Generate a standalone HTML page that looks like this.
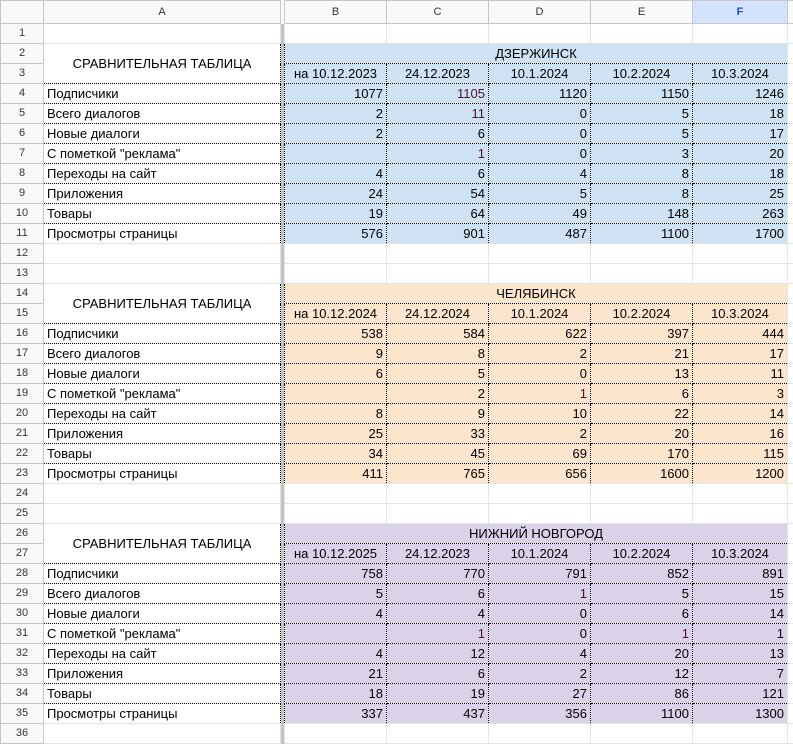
<!DOCTYPE html>
<html><head><meta charset="utf-8"><style>
body{margin:0;background:#fff;width:793px;height:729px;overflow:hidden;font-family:"Liberation Sans",Arial,sans-serif;}
table{border-collapse:collapse;table-layout:fixed;font-size:13px;color:#000;width:799px;}
td{height:19px;padding:0 3px;border:1px solid #e2e3e3;white-space:nowrap;overflow:hidden;line-height:19px;}
tr.h td{height:22px;background:#f8f9fa;border-color:#c7c7c7;font-size:11px;text-align:center;color:#333;}
td.n{background:#f8f9fa;border-color:#c7c7c7;font-size:11px;text-align:center;color:#333;padding:0;}
td.fz{background:#c4c4c4;border:none;padding:0;}
td.sel{background:#d3e3fd !important;color:#0b57d0 !important;font-weight:bold;}
.d{border:1px dotted #000;}
.r{text-align:right;}
.c{text-align:center;}
.b{background:#cfe2f3;}
.o{background:#fce5cd;}
.p{background:#d9d2e9;}
.rd{color:#4c0f2c;}
</style></head><body>
<table>
<colgroup><col style="width:43px"><col style="width:237px"><col style="width:4px"><col style="width:102px"><col style="width:102px"><col style="width:102px"><col style="width:102px"><col style="width:95px"><col style="width:12px"></colgroup>
<tr class="h"><td></td><td>A</td><td class="fz"></td><td>B</td><td>C</td><td>D</td><td>E</td><td class="sel">F</td><td></td></tr>
<tr><td class="n">1</td><td></td><td class="fz"></td><td></td><td></td><td></td><td></td><td></td><td></td></tr>

<tr><td class="n">2</td><td class="d c" rowspan="2">СРАВНИТЕЛЬНАЯ ТАБЛИЦА</td><td class="fz"></td><td class="d c b" colspan="5">ДЗЕРЖИНСК</td><td></td></tr>
<tr><td class="n">3</td><td class="fz"></td><td class="d c b">на 10.12.2023</td><td class="d c b">24.12.2023</td><td class="d c b">10.1.2024</td><td class="d c b">10.2.2024</td><td class="d c b">10.3.2024</td><td></td></tr>
<tr><td class="n">4</td><td class="d">Подписчики</td><td class="fz"></td><td class="d r b">1077</td><td class="d r b rd">1105</td><td class="d r b">1120</td><td class="d r b">1150</td><td class="d r b">1246</td><td></td></tr>
<tr><td class="n">5</td><td class="d">Всего диалогов</td><td class="fz"></td><td class="d r b">2</td><td class="d r b rd">11</td><td class="d r b">0</td><td class="d r b">5</td><td class="d r b">18</td><td></td></tr>
<tr><td class="n">6</td><td class="d">Новые диалоги</td><td class="fz"></td><td class="d r b">2</td><td class="d r b">6</td><td class="d r b">0</td><td class="d r b">5</td><td class="d r b">17</td><td></td></tr>
<tr><td class="n">7</td><td class="d">С пометкой "реклама"</td><td class="fz"></td><td class="d r b"></td><td class="d r b rd">1</td><td class="d r b">0</td><td class="d r b">3</td><td class="d r b">20</td><td></td></tr>
<tr><td class="n">8</td><td class="d">Переходы на сайт</td><td class="fz"></td><td class="d r b">4</td><td class="d r b">6</td><td class="d r b">4</td><td class="d r b">8</td><td class="d r b">18</td><td></td></tr>
<tr><td class="n">9</td><td class="d">Приложения</td><td class="fz"></td><td class="d r b">24</td><td class="d r b">54</td><td class="d r b">5</td><td class="d r b">8</td><td class="d r b">25</td><td></td></tr>
<tr><td class="n">10</td><td class="d">Товары</td><td class="fz"></td><td class="d r b">19</td><td class="d r b">64</td><td class="d r b">49</td><td class="d r b">148</td><td class="d r b">263</td><td></td></tr>
<tr><td class="n">11</td><td class="d">Просмотры страницы</td><td class="fz"></td><td class="d r b">576</td><td class="d r b">901</td><td class="d r b">487</td><td class="d r b">1100</td><td class="d r b">1700</td><td></td></tr>
<tr><td class="n">12</td><td></td><td class="fz"></td><td></td><td></td><td></td><td></td><td></td><td></td></tr>
<tr><td class="n">13</td><td></td><td class="fz"></td><td></td><td></td><td></td><td></td><td></td><td></td></tr>

<tr><td class="n">14</td><td class="d c" rowspan="2">СРАВНИТЕЛЬНАЯ ТАБЛИЦА</td><td class="fz"></td><td class="d c o" colspan="5">ЧЕЛЯБИНСК</td><td></td></tr>
<tr><td class="n">15</td><td class="fz"></td><td class="d c o">на 10.12.2024</td><td class="d c o">24.12.2024</td><td class="d c o">10.1.2024</td><td class="d c o">10.2.2024</td><td class="d c o">10.3.2024</td><td></td></tr>
<tr><td class="n">16</td><td class="d">Подписчики</td><td class="fz"></td><td class="d r o">538</td><td class="d r o">584</td><td class="d r o">622</td><td class="d r o">397</td><td class="d r o">444</td><td></td></tr>
<tr><td class="n">17</td><td class="d">Всего диалогов</td><td class="fz"></td><td class="d r o">9</td><td class="d r o">8</td><td class="d r o">2</td><td class="d r o">21</td><td class="d r o">17</td><td></td></tr>
<tr><td class="n">18</td><td class="d">Новые диалоги</td><td class="fz"></td><td class="d r o">6</td><td class="d r o">5</td><td class="d r o">0</td><td class="d r o">13</td><td class="d r o">11</td><td></td></tr>
<tr><td class="n">19</td><td class="d">С пометкой "реклама"</td><td class="fz"></td><td class="d r o"></td><td class="d r o">2</td><td class="d r o rd">1</td><td class="d r o">6</td><td class="d r o">3</td><td></td></tr>
<tr><td class="n">20</td><td class="d">Переходы на сайт</td><td class="fz"></td><td class="d r o">8</td><td class="d r o">9</td><td class="d r o">10</td><td class="d r o">22</td><td class="d r o">14</td><td></td></tr>
<tr><td class="n">21</td><td class="d">Приложения</td><td class="fz"></td><td class="d r o">25</td><td class="d r o">33</td><td class="d r o">2</td><td class="d r o">20</td><td class="d r o">16</td><td></td></tr>
<tr><td class="n">22</td><td class="d">Товары</td><td class="fz"></td><td class="d r o">34</td><td class="d r o">45</td><td class="d r o">69</td><td class="d r o">170</td><td class="d r o">115</td><td></td></tr>
<tr><td class="n">23</td><td class="d">Просмотры страницы</td><td class="fz"></td><td class="d r o">411</td><td class="d r o">765</td><td class="d r o">656</td><td class="d r o">1600</td><td class="d r o">1200</td><td></td></tr>
<tr><td class="n">24</td><td></td><td class="fz"></td><td></td><td></td><td></td><td></td><td></td><td></td></tr>
<tr><td class="n">25</td><td></td><td class="fz"></td><td></td><td></td><td></td><td></td><td></td><td></td></tr>

<tr><td class="n">26</td><td class="d c" rowspan="2">СРАВНИТЕЛЬНАЯ ТАБЛИЦА</td><td class="fz"></td><td class="d c p" colspan="5">НИЖНИЙ НОВГОРОД</td><td></td></tr>
<tr><td class="n">27</td><td class="fz"></td><td class="d c p">на 10.12.2025</td><td class="d c p">24.12.2023</td><td class="d c p">10.1.2024</td><td class="d c p">10.2.2024</td><td class="d c p">10.3.2024</td><td></td></tr>
<tr><td class="n">28</td><td class="d">Подписчики</td><td class="fz"></td><td class="d r p">758</td><td class="d r p">770</td><td class="d r p">791</td><td class="d r p">852</td><td class="d r p">891</td><td></td></tr>
<tr><td class="n">29</td><td class="d">Всего диалогов</td><td class="fz"></td><td class="d r p">5</td><td class="d r p">6</td><td class="d r p rd">1</td><td class="d r p">5</td><td class="d r p">15</td><td></td></tr>
<tr><td class="n">30</td><td class="d">Новые диалоги</td><td class="fz"></td><td class="d r p">4</td><td class="d r p">4</td><td class="d r p">0</td><td class="d r p">6</td><td class="d r p">14</td><td></td></tr>
<tr><td class="n">31</td><td class="d">С пометкой "реклама"</td><td class="fz"></td><td class="d r p"></td><td class="d r p rd">1</td><td class="d r p">0</td><td class="d r p rd">1</td><td class="d r p">1</td><td></td></tr>
<tr><td class="n">32</td><td class="d">Переходы на сайт</td><td class="fz"></td><td class="d r p">4</td><td class="d r p">12</td><td class="d r p">4</td><td class="d r p">20</td><td class="d r p">13</td><td></td></tr>
<tr><td class="n">33</td><td class="d">Приложения</td><td class="fz"></td><td class="d r p">21</td><td class="d r p">6</td><td class="d r p">2</td><td class="d r p">12</td><td class="d r p">7</td><td></td></tr>
<tr><td class="n">34</td><td class="d">Товары</td><td class="fz"></td><td class="d r p">18</td><td class="d r p">19</td><td class="d r p">27</td><td class="d r p">86</td><td class="d r p">121</td><td></td></tr>
<tr><td class="n">35</td><td class="d">Просмотры страницы</td><td class="fz"></td><td class="d r p">337</td><td class="d r p">437</td><td class="d r p">356</td><td class="d r p">1100</td><td class="d r p">1300</td><td></td></tr>
<tr><td class="n">36</td><td></td><td class="fz"></td><td></td><td></td><td></td><td></td><td></td><td></td></tr>
</table>
</body></html>
